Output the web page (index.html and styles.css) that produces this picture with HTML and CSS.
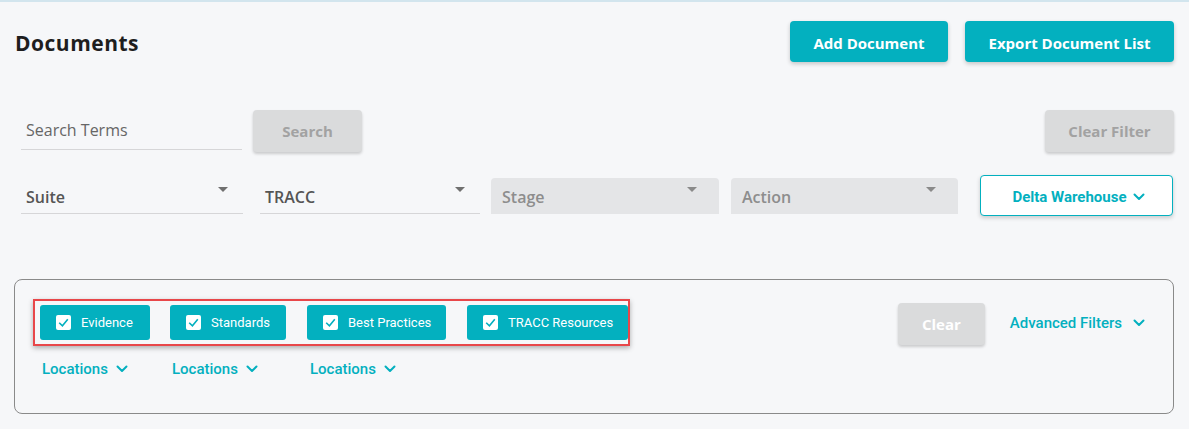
FILE: index.html
```html
<!DOCTYPE html>
<html lang="en">
<head>
  <meta charset="UTF-8">
  <title>Documents</title>
  <link rel="stylesheet" href="styles.css">
</head>
<body>
  <div class="page">
    <!-- Header -->
    <div class="page-header">
      <h1 class="page-title">Documents</h1>
      <div class="header-actions">
        <button class="btn btn-primary btn-add">Add Document</button>
        <button class="btn btn-primary btn-export">Export Document List</button>
      </div>
    </div>

    <!-- Search -->
    <div class="search-row">
      <div class="search-left">
        <div class="field field-search">Search Terms</div>
        <button class="btn btn-disabled btn-search">Search</button>
      </div>
      <button class="btn btn-disabled btn-clear-filter">Clear Filter</button>
    </div>

    <!-- Selects -->
    <div class="select-row">
      <div class="select select-suite"><span>Suite</span><i class="caret"></i></div>
      <div class="select select-tracc"><span>TRACC</span><i class="caret"></i></div>
      <div class="select select-filled select-stage"><span>Stage</span><i class="caret"></i></div>
      <div class="select select-filled select-action"><span>Action</span><i class="caret"></i></div>
      <button class="btn btn-outline btn-site">
        Delta Warehouse
        <svg class="chevron" viewBox="0 0 12 8"><polyline points="1.5,1.5 6,6 10.5,1.5"></polyline></svg>
      </button>
    </div>

    <!-- Filter panel -->
    <div class="filter-panel">
      <div class="filter-left">
        <div class="chip-row">
          <label class="chip chip-evidence"><span class="box"><svg viewBox="0 0 14 14"><polyline points="3,7.2 6,10 11,4"></polyline></svg></span>Evidence</label>
          <label class="chip chip-standards"><span class="box"><svg viewBox="0 0 14 14"><polyline points="3,7.2 6,10 11,4"></polyline></svg></span>Standards</label>
          <label class="chip chip-best"><span class="box"><svg viewBox="0 0 14 14"><polyline points="3,7.2 6,10 11,4"></polyline></svg></span>Best Practices</label>
          <label class="chip chip-resources"><span class="box"><svg viewBox="0 0 14 14"><polyline points="3,7.2 6,10 11,4"></polyline></svg></span>TRACC Resources</label>
        </div>
        <div class="locations-row">
          <a class="link">Locations <svg class="chevron" viewBox="0 0 12 8"><polyline points="1.5,1.5 6,6 10.5,1.5"></polyline></svg></a>
          <a class="link">Locations <svg class="chevron" viewBox="0 0 12 8"><polyline points="1.5,1.5 6,6 10.5,1.5"></polyline></svg></a>
          <a class="link">Locations <svg class="chevron" viewBox="0 0 12 8"><polyline points="1.5,1.5 6,6 10.5,1.5"></polyline></svg></a>
        </div>
      </div>
      <div class="filter-right">
        <button class="btn btn-disabled btn-clear">Clear</button>
        <a class="link link-advanced">Advanced Filters <svg class="chevron" viewBox="0 0 12 8"><polyline points="1.5,1.5 6,6 10.5,1.5"></polyline></svg></a>
      </div>
    </div>
  </div>
</body>
</html>
```

FILE: styles.css
```css
* {
  margin: 0;
  padding: 0;
  box-sizing: border-box;
}

body {
  background: #f6f7f9;
  border-top: 2px solid #d2e5ee;
  font-family: 'Open Sans', 'Liberation Sans', sans-serif;
  color: #222;
}

.page {
  padding: 0 15px 0 14px;
}

/* Header */
.page-header {
  display: flex;
  justify-content: space-between;
  align-items: center;
  padding-top: 19px;
}

.page-title {
  font-size: 21px;
  font-weight: 700;
  color: #1e1e1e;
  padding-left: 1px;
  letter-spacing: 0.5px;
  margin-top: 2px;
}

.header-actions {
  display: flex;
  gap: 17px;
}

.btn {
  font-family: 'Open Sans', 'Liberation Sans', sans-serif;
  font-weight: 700;
  font-size: 15px;
  border: none;
  border-radius: 4px;
  height: 42px;
  cursor: pointer;
}

.btn-primary {
  background: #03b0bf;
  color: #fff;
  box-shadow: 0 2px 4px rgba(0, 0, 0, 0.2);
  height: 41px;
  padding-top: 2px;
}

.btn-add {
  width: 158px;
}

.btn-export {
  width: 209px;
}

.btn-disabled {
  background: #dadbdc;
  color: #a2a2a2;
  box-shadow: 0 2px 3px rgba(0, 0, 0, 0.18);
}

/* Search */
.search-row {
  display: flex;
  justify-content: space-between;
  align-items: center;
  margin-top: 48px;
  padding-left: 7px;
}

.search-left {
  display: flex;
  align-items: center;
  gap: 11px;
}

.field-search {
  width: 221px;
  height: 36px;
  font-size: 16px;
  color: #666;
  padding: 5px 0 0 5px;
  border-bottom: 1px solid #d6d6d8;
  margin-top: 1px;
}

.btn-search {
  width: 109px;
}

.btn-clear-filter {
  width: 129px;
}

/* Selects */
.select-row {
  display: flex;
  align-items: center;
  margin-top: 23px;
  padding-left: 7px;
}

.select {
  display: flex;
  justify-content: space-between;
  align-items: center;
  height: 37px;
  font-size: 16px;
  color: #555;
  padding: 3px 15px 0 5px;
  border-bottom: 1px solid #d6d6d8;
}

.select span {
  font-weight: 600;
}

.caret {
  width: 0;
  height: 0;
  border-left: 5px solid transparent;
  border-right: 5px solid transparent;
  border-top: 5px solid #707070;
  margin-top: -15px;
}

.select-suite {
  width: 222px;
}

.select-tracc {
  width: 220px;
  margin-left: 17px;
}

.select-filled {
  background: #e4e5e7;
  border-bottom: none;
  border-radius: 4px 4px 0 0;
  color: #8d8d8d;
  padding-left: 11px;
  padding-right: 22px;
  height: 36px;
}

.select-filled .caret {
  border-top-color: #8a8a8a;
}

.select-stage {
  width: 228px;
  margin-left: 11px;
}

.select-action {
  width: 227px;
  margin-left: 12px;
}

.btn-outline {
  display: flex;
  align-items: center;
  justify-content: center;
  gap: 6px;
  background: #fff;
  color: #03b0bf;
  border: 1px solid #03b0bf;
  box-shadow: 0 2px 4px rgba(0, 0, 0, 0.18);
  font-family: Roboto, 'Liberation Sans', sans-serif;
  font-size: 15px;
  font-weight: 700;
}

.btn-site {
  width: 193px;
  height: 41px;
  margin-left: 22px;
  padding: 2px 0 0 4px;
}

.chevron {
  width: 12px;
  height: 8px;
  fill: none;
  stroke: currentColor;
  stroke-width: 2;
  stroke-linecap: round;
  stroke-linejoin: round;
}

/* Filter panel */
.filter-panel {
  display: flex;
  justify-content: space-between;
  align-items: flex-start;
  margin-top: 63px;
  height: 135px;
  border: 1px solid #8a8a8a;
  border-radius: 8px;
  padding: 19px 28px 0 18px;
}

.chip-row {
  display: flex;
  border: 2px solid #e8474a;
  padding: 4px 0 4px 5px;
  box-shadow: 0 2px 5px rgba(0, 0, 0, 0.3);
  width: 597px;
}

.chip {
  display: flex;
  align-items: center;
  gap: 10px;
  height: 35px;
  background: #03b0bf;
  color: #fff;
  border-radius: 3px;
  font-family: Roboto, 'Liberation Sans', sans-serif;
  font-size: 13px;
  padding-left: 16px;
}

.chip + .chip {
  margin-left: 20px;
}

.chip-evidence {
  width: 110px;
}

.chip-standards {
  width: 116px;
}

.chip-best {
  width: 139px;
  margin-left: 21px !important;
}

.chip-resources {
  width: 161px;
  margin-left: 21px !important;
}

.box {
  display: flex;
  align-items: center;
  justify-content: center;
  width: 15px;
  height: 15px;
  background: #fff;
  border-radius: 2px;
}

.box svg {
  width: 15px;
  height: 15px;
  fill: none;
  stroke: #03b0bf;
  stroke-width: 1.5;
}

.locations-row {
  display: grid;
  grid-template-columns: 130px 138px auto;
  padding-left: 9px;
  margin-top: 14px;
}

.link {
  display: flex;
  align-items: center;
  gap: 8px;
  color: #03b0bf;
  font-family: Roboto, 'Liberation Sans', sans-serif;
  font-size: 15px;
  font-weight: 500;
  cursor: pointer;
}

.filter-right {
  display: flex;
  align-items: center;
  gap: 25px;
  padding-top: 4px;
}

.btn-clear {
  width: 87px;
  color: #fff;
}

.link-advanced {
  gap: 11px;
  margin-top: -2px;
}
```
